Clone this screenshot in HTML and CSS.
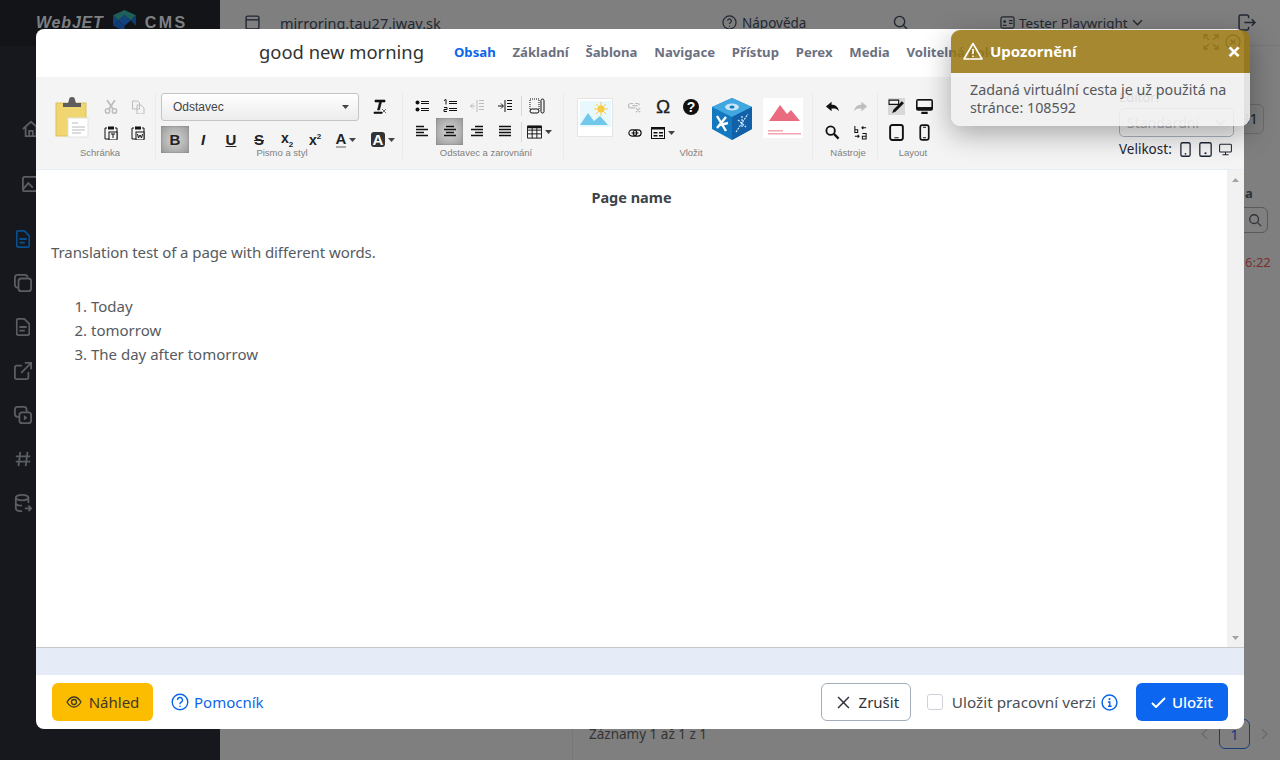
FILE: index.html
```html
<!DOCTYPE html>
<html lang="sk">
<head>
  <meta charset="UTF-8" />
  <title>WebJET CMS</title>
  <meta name="viewport" content="width=device-width, initial-scale=1.0" />
  <link rel="stylesheet" href="styles.css">
</head>
<body>
  <svg class="sprites" width="0" height="0">
    <symbol id="i-file" viewBox="0 0 16 20"><path d="M2.5 1h7L15 6.5V17a2 2 0 0 1-2 2H3a2 2 0 0 1-2-2V2.500A1.500 1.500 0 0 1 2.500 1zM4 10h8M4 14h6" fill="none" stroke="currentColor" stroke-width="2"/></symbol>
    <symbol id="i-caret" viewBox="0 0 7 4"><path d="M0 0h7L3.500 4z" fill="currentColor"/></symbol>
  </svg>

  <aside class="sidebar">
    <div class="logo">
      <span class="logo-web">WebJET</span>
      <svg class="logo-cube" viewBox="0 0 24 20"><path d="M12 0l11 5-5 5-6-5-6 5-5-5z" fill="#1d5f5a"/><path d="M1 5l5 5-5 5zM12 5l6 5-6 5-6-5z" fill="#14427e"/><path d="M23 5v10l-5-5zM1 15l5-5 6 5v5z" fill="#0f3d75"/></svg>
      <span class="logo-cms">CMS</span>
    </div>
    <nav class="side-nav">
      <svg class="side-icon" viewBox="0 0 22 20"><path d="M2 10l9-8 9 8M5 8v10h12V8M9 18v-6h4v6" fill="none" stroke="currentColor" stroke-width="2"/></svg>
      <svg class="side-icon" viewBox="0 0 22 20"><rect x="2" y="2" width="18" height="16" rx="2" fill="none" stroke="currentColor" stroke-width="2"/><path d="M2 16l6-7 5 5" fill="none" stroke="currentColor" stroke-width="2"/></svg>
      <svg class="side-icon active" viewBox="0 0 16 20"><use href="#i-file"/></svg>
      <svg class="side-icon" viewBox="0 0 20 20"><rect x="5" y="5" width="14" height="14" rx="3" fill="none" stroke="currentColor" stroke-width="2"/><path d="M5 15a3 3 0 0 1-4-3V4a3 3 0 0 1 3-3h8a3 3 0 0 1 3 3" fill="none" stroke="currentColor" stroke-width="2"/></svg>
      <svg class="side-icon" viewBox="0 0 16 20"><use href="#i-file"/></svg>
      <svg class="side-icon" viewBox="0 0 20 20"><path d="M9 4H3a2 2 0 0 0-2 2v11a2 2 0 0 0 2 2h11a2 2 0 0 0 2-2v-6M8 12L18 2M12 1h7v7" fill="none" stroke="currentColor" stroke-width="2"/></svg>
      <svg class="side-icon" viewBox="0 0 20 20"><rect x="1" y="1" width="13" height="11" rx="3" fill="none" stroke="currentColor" stroke-width="2"/><rect x="6" y="7" width="13" height="12" rx="3" fill="#16181d" stroke="currentColor" stroke-width="2"/><path d="M11 10l4 3-4 3z" fill="currentColor"/></svg>
      <svg class="side-icon" viewBox="0 0 20 20"><path d="M7 2L5 18M15 2l-2 16M2 7h16M2 13h16" fill="none" stroke="currentColor" stroke-width="2"/></svg>
      <svg class="side-icon" viewBox="0 0 20 20"><ellipse cx="9" cy="4" rx="7" ry="3" fill="none" stroke="currentColor" stroke-width="2"/><path d="M2 4v12c0 2 3 3 7 3M16 4v6M2 10c0 2 3 3 7 3M12 16h7M16 13l3 3-3 3" fill="none" stroke="currentColor" stroke-width="2"/></svg>
    </nav>
  </aside>

  <main class="page">
    <div class="topbar">
      <svg class="top-icon" viewBox="0 0 14 14"><rect x="1" y="1" width="12" height="12" rx="1.500" fill="none" stroke="currentColor" stroke-width="1.300"/><path d="M1 4.500h12" stroke="currentColor" stroke-width="1.300"/></svg>
      <span class="top-domain">mirroring.tau27.iway.sk</span>
      <span class="top-help">
        <svg class="top-icon" viewBox="0 0 16 16"><circle cx="8" cy="8" r="7" fill="none" stroke="currentColor" stroke-width="1.300"/><path d="M6 6.200a2 2 0 1 1 3 1.800c-.8.500-1 .9-1 1.700M8 11.500v1" fill="none" stroke="currentColor" stroke-width="1.300"/></svg>
        Nápověda
      </span>
      <svg class="top-icon top-search" viewBox="0 0 16 16"><circle cx="7" cy="7" r="5.500" fill="none" stroke="currentColor" stroke-width="1.500"/><path d="M11 11l4 4" stroke="currentColor" stroke-width="1.500"/></svg>
      <span class="top-user">
        <svg class="top-icon" viewBox="0 0 16 14"><rect x="1" y="1" width="14" height="12" rx="2" fill="none" stroke="currentColor" stroke-width="1.300"/><circle cx="5" cy="6" r="1.500" fill="currentColor"/><path d="M3 10h4M9.500 5h4M9.500 8h4" stroke="currentColor" stroke-width="1.300"/></svg>
        Tester Playwright
        <svg class="top-chev" viewBox="0 0 10 6"><path d="M1 1l4 4 4-4" fill="none" stroke="currentColor" stroke-width="1.300"/></svg>
      </span>
      <svg class="top-icon top-logout" viewBox="0 0 17 16"><path d="M10 4V2.500A1.500 1.500 0 0 0 8.500 1h-6A1.500 1.500 0 0 0 1 2.500v11A1.500 1.500 0 0 0 2.500 15h6a1.500 1.500 0 0 0 1.500-1.500V12M6 8h10M13 5l3 3-3 3" fill="none" stroke="currentColor" stroke-width="1.400"/></svg>
    </div>
    <div class="page-bottom">
      <span>Záznamy 1 až 1 z 1</span>
      <span class="pager">
        <svg class="pager-chev" viewBox="0 0 6 10"><path d="M5 1L1 5l4 4" fill="none" stroke="currentColor" stroke-width="1.300"/></svg>
        <b class="pager-num">1</b>
        <svg class="pager-chev" viewBox="0 0 6 10"><path d="M1 1l4 4-4 4" fill="none" stroke="currentColor" stroke-width="1.300"/></svg>
      </span>
    </div>
  </main>

  <div class="peek-th">a</div>
  <div class="peek-search"><svg viewBox="0 0 16 16"><circle cx="7" cy="7" r="5" fill="none" stroke="currentColor" stroke-width="1.500"/><path d="M11 11l4 4" stroke="currentColor" stroke-width="1.500"/></svg></div>
  <div class="peek-time">6:22</div>
  <div class="peek-one">81</div>

  <section class="modal">
    <header class="modal-head">
      <h2 class="modal-title">good new morning</h2>
      <ul class="tabs">
        <li class="tab active">Obsah</li>
        <li class="tab">Základní</li>
        <li class="tab">Šablona</li>
        <li class="tab">Navigace</li>
        <li class="tab">Přístup</li>
        <li class="tab">Perex</li>
        <li class="tab">Media</li>
        <li class="tab">Volitelná pole</li>
      </ul>
      <span class="head-tools">
        <svg viewBox="0 0 16 16"><path d="M1 5V1h4M11 1h4v4M15 11v4h-4M5 15H1v-4M1 1l5 5M15 1l-5 5M15 15l-5-5M1 15l5-5" fill="none" stroke="currentColor" stroke-width="1.300"/></svg>
        <svg viewBox="0 0 16 16"><circle cx="8" cy="8" r="7" fill="none" stroke="currentColor" stroke-width="1.300"/><path d="M5.500 5.500l5 5M10.500 5.500l-5 5" stroke="currentColor" stroke-width="1.300"/></svg>
      </span>
    </header>

    <div class="ribbon">
      <div class="group group-clip">
        <div class="group-body">
          <svg class="big-clip" viewBox="0 0 34 41">
            <rect x="1" y="6" width="30" height="33" fill="#efd670" stroke="#ddc25a"/>
            <path d="M8 6h5l1-3a3 3 0 0 1 6 0l1 3h5v4H8z" fill="#5d5d5d"/>
            <rect x="13" y="21" width="20" height="19" fill="#fff" stroke="#e2e2e2"/>
            <path d="M17 26h6M17 30h13M17 33h13M17 36h9" stroke="#b9b9b9"/>
          </svg>
          <div class="icons c2">
            <span class="tb off"><svg viewBox="0 0 14 14"><circle cx="3.500" cy="11" r="2.200" fill="none" stroke="currentColor" stroke-width="1.500"/><circle cx="10.500" cy="11" r="2.200" fill="none" stroke="currentColor" stroke-width="1.500"/><path d="M3 0l6 9M11 0L5 9" stroke="currentColor" stroke-width="1.800"/></svg></span>
            <span class="tb off"><svg viewBox="0 0 14 14"><path d="M1.500 1h5l2 2v6h-7zM6 5h4l3 3v6H6z" fill="#f4f4f4" stroke="currentColor"/></svg></span>
            <span class="tb"><svg viewBox="0 0 14 14"><path d="M3 2H1v11h12V2h-2" fill="none" stroke="currentColor"/><rect x="4" y="0.500" width="6" height="3" fill="currentColor"/><rect x="5" y="6" width="8" height="8" fill="#f4f4f4" stroke="currentColor"/><path d="M7 8h4M9 8v4" stroke="currentColor"/></svg></span>
            <span class="tb"><svg viewBox="0 0 14 14"><path d="M3 2H1v11h12V2h-2" fill="none" stroke="currentColor"/><rect x="4" y="0.500" width="6" height="3" fill="currentColor"/><rect x="5" y="6" width="8" height="8" fill="#f4f4f4" stroke="currentColor"/><path d="M6.500 8l1 4 1.500-3 1.500 3 1-4" fill="none" stroke="currentColor"/></svg></span>
          </div>
        </div>
        <small class="group-label">Schránka</small>
      </div>

      <div class="group group-font">
        <div class="font-top">
          <span class="select-format">Odstavec<svg class="caret" viewBox="0 0 7 4"><use href="#i-caret"/></svg></span>
          <span class="tb"><svg viewBox="0 0 16 16"><path d="M4 1h10v2H10.500L8.500 11H6.500L8.500 3H4zM3 13h8v1.500H3zM11 10l4 4M15 10l-4 4" fill="currentColor" stroke="currentColor" stroke-width=".6"/></svg></span>
        </div>
        <div class="font-row">
          <span class="tb pressed"><b class="glyph">B</b></span>
          <span class="tb"><i class="glyph serif">I</i></span>
          <span class="tb"><b class="glyph under">U</b></span>
          <span class="tb"><b class="glyph strike">S</b></span>
          <span class="tb"><b class="glyph small">x<sub>2</sub></b></span>
          <span class="tb"><b class="glyph small">x<sup>2</sup></b></span>
          <span class="tb wide"><b class="glyph color-a">A</b><svg class="caret" viewBox="0 0 7 4"><use href="#i-caret"/></svg></span>
          <span class="tb wide"><b class="glyph bg-a">A</b><svg class="caret" viewBox="0 0 7 4"><use href="#i-caret"/></svg></span>
        </div>
        <small class="group-label">Pismo a styl</small>
      </div>

      <div class="group group-para">
        <div class="icons c5">
          <span class="tb"><svg viewBox="0 0 14 14"><circle cx="2.500" cy="3.500" r="2" fill="currentColor"/><circle cx="2.500" cy="10.500" r="2" fill="currentColor"/><path d="M6 2.500h8M6 4.500h8M6 9.500h8M6 11.500h8" stroke="currentColor"/></svg></span>
          <span class="tb"><svg viewBox="0 0 14 14"><path d="M1 1.500l2-1v5M1 8.500h3v2H1v2h3M6 2.500h8M6 4.500h8M6 9.500h8M6 11.500h8" fill="none" stroke="currentColor"/></svg></span>
          <span class="tb off"><svg viewBox="0 0 14 14"><path d="M7 1v12M9 1.500h5M9 4.500h5M9 7.500h5M9 10.500h5M0 7h5M3 4.500L0.500 7 3 9.500" fill="none" stroke="currentColor"/></svg></span>
          <span class="tb"><svg viewBox="0 0 14 14"><path d="M7 1v12M9 1.500h5M9 4.500h5M9 7.500h5M9 10.500h5M0 7h5M3 4.500L5.500 7 3 9.500" fill="none" stroke="currentColor"/></svg></span>
          <span class="tb sep"><svg viewBox="0 0 16 16"><path d="M1 1h9v11H1z" fill="none" stroke="currentColor" stroke-dasharray="1 1"/><rect x="1" y="11" width="9" height="4" rx="2" fill="#f4f4f4" stroke="currentColor"/><rect x="12" y="1" width="3" height="14" rx="1.500" fill="#f4f4f4" stroke="currentColor"/></svg></span>
          <span class="tb"><svg viewBox="0 0 14 14"><path d="M1 1.500h8M1 4.500h12M1 7.500h8M1 10.500h12" stroke="currentColor" stroke-width="1.600"/></svg></span>
          <span class="tb pressed"><svg viewBox="0 0 14 14"><path d="M3 1.500h8M1 4.500h12M3 7.500h8M1 10.500h12" stroke="currentColor" stroke-width="1.600"/></svg></span>
          <span class="tb"><svg viewBox="0 0 14 14"><path d="M5 1.500h8M1 4.500h12M5 7.500h8M1 10.500h12" stroke="currentColor" stroke-width="1.600"/></svg></span>
          <span class="tb"><svg viewBox="0 0 14 14"><path d="M1 1.500h12M1 4.500h12M1 7.500h12M1 10.500h12" stroke="currentColor" stroke-width="1.600"/></svg></span>
          <span class="tb sep wide-table"><svg viewBox="0 0 16 14"><path d="M.5 .5h15v13H.5zM.5 5h15M.5 9h15M5.500 .5v13M10.500 .5v13" fill="none" stroke="currentColor"/><path d="M.5 .5h15V3H.5z" fill="currentColor"/></svg><svg class="caret" viewBox="0 0 7 4"><use href="#i-caret"/></svg></span>
        </div>
        <small class="group-label">Odstavec a zarovnání</small>
      </div>

      <div class="group group-insert">
        <div class="insert-body">
          <svg class="big-image" viewBox="0 0 36 39">
            <rect x=".5" y=".5" width="35" height="38" fill="#fff" stroke="#e4e4e4"/>
            <rect x="3" y="3" width="31" height="26" fill="#e9f8fc"/>
            <path d="M3 27l8-12 6 8 6-5 8 9z" fill="#72c8ea"/>
            <circle cx="24" cy="11" r="3.500" fill="#f7cb45"/>
            <path d="M24 4v14M17 11h14M19 6l10 10M29 6L19 16" stroke="#f7cb45"/>
          </svg>
          <div class="icons c3">
            <span class="tb off"><svg viewBox="0 0 16 14"><path d="M6 3H3a2 2 0 0 0 0 5h5M8 3h3a2 2 0 0 1 2 2M5 5.500h6M9 8l5 5M14 8l-5 5" fill="none" stroke="currentColor" stroke-width="1.400"/></svg></span>
            <span class="tb"><b class="glyph omega">Ω</b></span>
            <span class="tb"><b class="glyph help">?</b></span>
            <span class="tb"><svg viewBox="0 0 16 10"><rect x="1" y="1.500" width="9" height="7" rx="3.500" fill="none" stroke="currentColor" stroke-width="1.300"/><rect x="6" y="1.500" width="9" height="7" rx="3.500" fill="none" stroke="currentColor" stroke-width="1.300"/><path d="M4 5h8" stroke="currentColor" stroke-width="1.300"/></svg></span>
            <span class="tb wide"><svg viewBox="0 0 14 12"><rect x=".5" y=".5" width="13" height="11" fill="none" stroke="currentColor"/><path d="M.5 .5h13V2.500H.5z" fill="currentColor"/><path d="M2.500 5h4v1.500h-4zM2.500 8h4v1.500h-4zM8 5h4v1.500H8zM8 8h4v1.500H8z" fill="currentColor"/></svg><svg class="caret" viewBox="0 0 7 4"><use href="#i-caret"/></svg></span>
          </div>
          <svg class="big-cube" viewBox="0 0 40 42">
            <path d="M20 0l20 9v22L20 42 0 31V9z" fill="#1478c0"/>
            <path d="M20 0l20 9-20 10L0 9z" fill="#41a7e0"/>
            <path d="M20 19l20-10v22L20 42z" fill="#1160a8"/>
            <ellipse cx="20" cy="9" rx="7" ry="3.500" fill="#fff" opacity=".7"/>
            <ellipse cx="20" cy="9" rx="2.500" ry="1.500" fill="#1478c0"/>
            <path d="M5 18l9 15M14 19L5 30M8 27l8-2" stroke="#fff" stroke-width="2.400"/>
            <path d="M24 34l12-18M26 22l8 7M30 18v12" stroke="#d7ecfa" stroke-width="1.200" stroke-dasharray="2 1"/>
          </svg>
          <svg class="big-red" viewBox="0 0 40 40">
            <rect width="40" height="40" fill="#fff"/>
            <path d="M6 23L17 7l7 9 4-4 9 11z" fill="#ea6a7f"/>
            <path d="M5 32h15v1.500H5z" fill="#f3a6b2"/>
            <path d="M5 35h33v1.500H5z" fill="#f3a6b2"/>
          </svg>
        </div>
        <small class="group-label">Vložit</small>
      </div>

      <div class="group group-tools">
        <div class="icons c2">
          <span class="tb"><svg viewBox="0 0 16 12"><path d="M7 1L1 6l6 5V8c3 0 6 0 8 3-1-5-4-7-8-7z" fill="currentColor"/></svg></span>
          <span class="tb off"><svg viewBox="0 0 16 12"><path d="M9 1l6 5-6 5V8c-3 0-6 0-8 3 1-5 4-7 8-7z" fill="currentColor"/></svg></span>
          <span class="tb"><svg viewBox="0 0 16 16"><circle cx="6" cy="6" r="4.500" fill="none" stroke="currentColor" stroke-width="2"/><path d="M9.500 9.500l5 5" stroke="currentColor" stroke-width="2.400"/></svg></span>
          <span class="tb"><svg viewBox="0 0 16 16"><path d="M2 1v7h1M2 5h3v3H2M2 12h4M5 10.500L6.500 12 5 13.500M14 3h-4M11 1.500L9.500 3 11 4.500M10 9h4v6h-4v-3h4" fill="none" stroke="currentColor" stroke-width="1.100"/></svg></span>
        </div>
        <small class="group-label">Nástroje</small>
      </div>

      <div class="group group-layout">
        <div class="icons c2">
          <span class="tb toggled"><svg viewBox="0 0 16 16"><path d="M1 2h9v4H1z" fill="#f4f4f4" stroke="currentColor"/><path d="M4 14l1-3 8-8 2 2-8 8z" fill="currentColor"/></svg></span>
          <span class="tb"><svg viewBox="0 0 16 14"><rect x="0" y="0" width="16" height="11" rx="2" fill="currentColor"/><rect x="1.500" y="1.500" width="13" height="6" fill="#f4f4f4"/><path d="M5 14h6v-2H5z" fill="currentColor"/></svg></span>
          <span class="tb"><svg viewBox="0 0 14 16"><rect x="1" y="1" width="12" height="14" rx="2" fill="none" stroke="currentColor" stroke-width="1.800"/><path d="M5 13h4" stroke="currentColor"/></svg></span>
          <span class="tb"><svg viewBox="0 0 10 16"><rect x="1" y="1" width="8" height="14" rx="2" fill="none" stroke="currentColor" stroke-width="1.600"/><path d="M3.500 3h3M3.500 13h3" stroke="currentColor"/></svg></span>
        </div>
        <small class="group-label">Layout</small>
      </div>

      <div class="group-editor">
        <label class="editor-label">Editor:</label>
        <span class="editor-select">Standardní<svg viewBox="0 0 10 6"><path d="M1 1l4 4 4-4" fill="none" stroke="currentColor" stroke-width="1.200"/></svg></span>
        <div class="editor-size">
          Velikost:
          <svg viewBox="0 0 10 14"><rect x=".7" y=".7" width="8.600" height="12.600" rx="1.500" fill="none" stroke="currentColor" stroke-width="1.200"/><circle cx="5" cy="11" r=".8" fill="currentColor"/></svg>
          <svg viewBox="0 0 12 14"><rect x=".7" y=".7" width="10.600" height="12.600" rx="1.500" fill="none" stroke="currentColor" stroke-width="1.200"/><circle cx="6" cy="10.500" r="1" fill="currentColor"/></svg>
          <svg viewBox="0 0 15 14"><rect x=".7" y="1" width="13.600" height="9" rx="1" fill="none" stroke="currentColor" stroke-width="1.200"/><path d="M7.500 10v3M4 13h7" stroke="currentColor" stroke-width="1.200"/></svg>
        </div>
      </div>
    </div>

    <div class="editor-area">
      <article class="editor-content">
        <p class="page-name">Page name</p>
        <p class="intro">Translation test of a page with different words.</p>
        <ol class="words">
          <li>Today</li>
          <li>tomorrow</li>
          <li>The day after tomorrow</li>
        </ol>
      </article>
      <div class="scroll">
        <svg viewBox="0 0 7 4"><path d="M0 4h7L3.500 0z" fill="currentColor"/></svg>
        <svg viewBox="0 0 7 4"><use href="#i-caret"/></svg>
      </div>
    </div>
    <div class="strip"></div>

    <footer class="modal-foot">
      <button class="btn btn-preview">
        <svg viewBox="0 0 16 12"><path d="M1 6c2-3.300 4.300-5 7-5s5 1.700 7 5c-2 3.300-4.300 5-7 5S3 9.300 1 6z" fill="none" stroke="currentColor" stroke-width="1.300"/><circle cx="8" cy="6" r="2.500" fill="none" stroke="currentColor" stroke-width="1.300"/></svg>
        Náhled
      </button>
      <a class="help-link">
        <svg viewBox="0 0 18 18"><circle cx="9" cy="9" r="7.800" fill="none" stroke="currentColor" stroke-width="1.400"/><path d="M6.500 7a2.500 2.500 0 1 1 3.700 2.200c-.9.500-1.200 1-1.200 2M9 12.700v1.300" fill="none" stroke="currentColor" stroke-width="1.400"/></svg>
        Pomocník
      </a>
      <span class="foot-right">
        <button class="btn btn-cancel">
          <svg viewBox="0 0 12 12"><path d="M1 1l10 10M11 1L1 11" stroke="currentColor" stroke-width="1.400"/></svg>
          Zrušit
        </button>
        <label class="work-version"><span class="check"></span>Uložit pracovní verzi</label>
        <svg class="info" viewBox="0 0 16 16"><circle cx="8" cy="8" r="7" fill="none" stroke="currentColor" stroke-width="1.400"/><circle cx="8" cy="4.800" r="1" fill="currentColor"/><path d="M6.500 7.500H8.300V11.500M6.500 11.500h3.500" fill="none" stroke="currentColor" stroke-width="1.300"/></svg>
        <button class="btn btn-save">
          <svg viewBox="0 0 15 11"><path d="M1 6l4 4 9-9" fill="none" stroke="currentColor" stroke-width="2"/></svg>
          Uložit
        </button>
      </span>
    </footer>
  </section>

  <div class="toast">
    <div class="toast-head">
      <svg viewBox="0 0 20 18"><path d="M10 1.500L19 17H1z" fill="none" stroke="currentColor" stroke-width="1.600" stroke-linejoin="round"/><path d="M10 7v5M10 13.500v1.500" stroke="currentColor" stroke-width="1.600"/></svg>
      <strong>Upozornění</strong>
      <span class="toast-close">×</span>
    </div>
    <div class="toast-body">Zadaná virtuální cesta je už použitá na stránce: 108592</div>
  </div>
</body>
</html>
```

FILE: styles.css
```css
* {
  box-sizing: border-box;
}
html, body {
  height: 100%;
}
body {
  margin: 0;
  display: flex;
  height: 760px;
  overflow: hidden;
  background: #7f7f7f;
  color: #2f3237;
  font-family: "Noto Sans", sans-serif;
  font-size: 15px;
}
.sprites {
  position: absolute;
}

/* page behind the dialog */
.sidebar {
  width: 220px;
  background: #16181d;
  color: #5a5d62;
}
.logo {
  display: flex;
  align-items: center;
  height: 46px;
  padding-left: 36px;
  color: #7e8084;
  font-family: "Liberation Sans", sans-serif;
  font-weight: 700;
  font-size: 16px;
  background: #121418;
}
.logo-web {
  font-style: italic;
  letter-spacing: 0.8px;
}
.logo-cube {
  width: 25px;
  height: 21px;
  margin: -6px 8px 0 8px;
}
.logo-cms {
  letter-spacing: 2.500px;
}
.side-nav {
  display: flex;
  flex-direction: column;
  align-items: flex-start;
  gap: 26px;
  padding: 74px 0 0 14px;
}
.side-icon {
  width: 18px;
  height: 18px;
}
.side-nav .side-icon:nth-child(-n+2) {
  margin-left: 6px;
  width: 22px;
  margin-bottom: 11px;
}
.side-icon.active {
  color: #064f91;
}
.page {
  flex: 1;
  display: flex;
  flex-direction: column;
  justify-content: space-between;
  color: #222833;
}
.topbar {
  display: flex;
  align-items: center;
  height: 46px;
  padding-left: 25px;
  border-bottom: 1px solid #777;
  font-size: 14.500px;
}
.top-icon {
  width: 15px;
  height: 15px;
}
.top-domain {
  margin-left: 20px;
  width: 442px;
}
.top-help {
  display: flex;
  align-items: center;
  gap: 5px;
  width: 171px;
  font-size: 13.500px;
}
.top-search {
  margin-right: 92px;
}
.top-user {
  display: flex;
  align-items: center;
  gap: 4px;
  width: 238px;
  font-size: 13.400px;
}
.top-chev {
  width: 11px;
  height: 7px;
}
.top-logout {
  width: 18px;
  height: 17px;
}
.page-bottom {
  display: flex;
  align-items: center;
  justify-content: space-between;
  height: 48px;
  margin-left: 352px;
  padding: 0 12px 4px 16px;
  font-size: 13.500px;
  border-left: 1px solid #777;
  color: #333;
}
.pager {
  display: flex;
  align-items: center;
  gap: 11px;
  color: #6c6c6c;
}
.pager-chev {
  width: 7px;
  height: 12px;
}
.pager-num {
  display: flex;
  align-items: center;
  justify-content: center;
  width: 31px;
  height: 30px;
  border: 1px solid #1a3d7a;
  border-radius: 6px;
  color: #123a80;
  font-weight: 400;
  font-size: 15px;
}
.peek-th {
  position: absolute;
  left: 1245px;
  top: 184px;
  font-weight: 700;
  font-size: 13px;
}
.peek-search {
  position: absolute;
  left: 1238px;
  top: 207px;
  width: 30px;
  height: 26px;
  padding: 5px 0 0 9px;
  border: 1px solid #5a5a5a;
  border-radius: 6px;
}
.peek-search svg {
  display: block;
  width: 14px;
  height: 14px;
}
.peek-time {
  position: absolute;
  left: 1245px;
  top: 253px;
  color: #7a2f2f;
  font-size: 13px;
}
.peek-one {
  position: absolute;
  left: 1230px;
  top: 104px;
  width: 34px;
  height: 30px;
  padding: 3px 5px 0 0;
  text-align: right;
  border: 1px solid #6b6b6b;
  border-radius: 6px;
  color: #222;
  font-size: 15px;
}

/* dialog */
.modal {
  position: absolute;
  left: 36px;
  top: 29px;
  width: 1208px;
  height: 700px;
  display: flex;
  flex-direction: column;
  background: #fff;
  border-radius: 8px;
  overflow: hidden;
}
.modal-head {
  display: flex;
  align-items: center;
  height: 48px;
  flex-shrink: 0;
  padding: 0 0 3px 223px;
}
.modal-title {
  margin: 0;
  font-size: 18.400px;
  font-weight: 400;
  color: #333;
  white-space: nowrap;
}
.tabs {
  display: flex;
  gap: 16.800px;
  margin: 0 0 0 30px;
  padding: 0;
  list-style: none;
  font-size: 13.150px;
  font-weight: 700;
  color: #6b7080;
  white-space: nowrap;
}
.tab.active {
  color: #0d66e8;
}
.head-tools {
  display: flex;
  gap: 6px;
  align-self: flex-start;
  margin: 5px 3px 0 auto;
  color: #555;
}
.head-tools svg {
  width: 16px;
  height: 16px;
}

/* ribbon */
.ribbon {
  display: flex;
  height: 93px;
  flex-shrink: 0;
  padding: 16px 0 0 15px;
  background: #f4f4f4;
  border-bottom: 1px solid #e6ecf4;
  color: #111;
}
.group {
  position: relative;
  height: 66px;
  border-right: 1px solid #ebebeb;
}
.group-label {
  position: absolute;
  left: 6px;
  right: 0;
  top: 54px;
  text-align: center;
  font-family: "Liberation Sans", sans-serif;
  font-size: 9.500px;
  color: #808080;
}
.group-clip .group-label {
  left: 0;
  right: 6px;
}
.group-layout .group-label {
  left: 0;
}
.group-body,
.insert-body {
  display: flex;
}
.group-clip {
  width: 105px;
}
.big-clip {
  width: 34px;
  height: 41px;
  margin: 4px 0 0 4px;
}
.group-clip .icons {
  margin-left: 8px;
  grid-template-columns: repeat(2, 27.500px);
}
.icons {
  display: grid;
  grid-auto-rows: 26px;
}
.c2 {
  grid-template-columns: repeat(2, 28px);
}
.c3 {
  grid-template-columns: repeat(3, 28px);
}
.c5 {
  grid-template-columns: repeat(4, 27.700px) 33px;
}
.tb {
  display: flex;
  align-items: center;
  justify-content: center;
  height: 27px;
  color: #111;
}
.tb svg {
  width: 14px;
  height: 14px;
}
.tb.off {
  color: #bdbdbd;
}
.tb.pressed {
  background: radial-gradient(circle, #c9c9c9 20%, #989898 100%);
  box-shadow: inset 0 0 2px #777;
}
.tb.toggled svg {
  width: 18px;
  height: 18px;
  background: #d8d8d8;
}
.tb.sep {
  border-left: 1px solid #d8d8d8;
  margin-left: 2px;
  height: 20px;
  margin-top: 3px;
}
.tb.sep svg {
  width: 16px;
  height: 16px;
}
.tb.wide-table {
  justify-content: flex-start;
  padding-left: 5px;
}
.tb .caret,
.tb.sep .caret,
.select-format .caret {
  width: 7px;
  height: 4px;
  margin-left: 3px;
  color: #444;
  flex-shrink: 0;
}
.group-font {
  width: 247px;
  padding-left: 5px;
}
.font-top {
  display: flex;
  gap: 6px;
  align-items: center;
}
.select-format {
  display: flex;
  align-items: center;
  justify-content: space-between;
  width: 198px;
  height: 28px;
  padding: 0 9px 0 11px;
  border: 1px solid #c4c4c4;
  border-radius: 3px;
  background: linear-gradient(#fff, #ececec);
  font-family: "Liberation Sans", sans-serif;
  font-size: 12px;
  color: #444;
}
.font-top .tb {
  width: 28px;
}
.font-top .tb svg {
  width: 16px;
  height: 16px;
}
.font-row {
  display: flex;
  margin-top: 5px;
}
.font-row .tb {
  width: 28px;
}
.font-row .tb.wide {
  width: 34px;
}
.font-row .tb.wide:last-child {
  margin-left: 3px;
}
.glyph {
  font-family: "Liberation Sans", sans-serif;
  font-size: 15px;
  line-height: 1;
  color: #222;
  font-weight: 700;
}
.glyph.under {
  text-decoration: underline;
}
.glyph.strike {
  text-decoration: line-through;
}
.glyph.small {
  font-size: 14px;
}
.glyph.small sub,
.glyph.small sup {
  font-size: 8px;
}
.glyph.color-a {
  border-bottom: 2px solid #aaa;
}
.glyph.bg-a {
  padding: 0 2px;
  border-radius: 3px;
  background: #333;
  color: #fff;
}
.glyph.omega {
  font-size: 19px;
  font-weight: 400;
  -webkit-text-stroke: 0.3px #222;
}
.glyph.help {
  display: block;
  width: 16px;
  height: 16px;
  border-radius: 50%;
  background: #111;
  color: #fff;
  font-size: 14px;
  line-height: 16px;
  text-align: center;
}
.group-para {
  width: 161px;
  padding-left: 5px;
}
.group-para .tb {
  height: 26px;
}
.group-para .tb.sep {
  height: 20px;
}
.group-para .tb.pressed {
  height: 27px;
  margin-top: -1px;
}
.group-insert {
  width: 249px;
  padding-left: 13px;
}
.big-image {
  width: 36px;
  height: 39px;
  margin-top: 5px;
}
.insert-body .icons {
  margin-left: 8px;
  align-self: flex-start;
}
.big-cube {
  width: 40px;
  height: 42px;
  margin: 5px 0 0 7px;
}
.big-red {
  width: 40px;
  height: 40px;
  margin: 5px 0 0 11px;
}
.group-tools {
  width: 65px;
  padding-left: 5px;
}
.group-tools .tb svg {
  width: 15px;
  height: 15px;
}
.group-layout {
  width: 70px;
  padding-left: 4px;
  border-right: none;
}
.group-layout .tb svg {
  width: 17px;
  height: 17px;
}
.group-editor {
  margin-left: 171px;
  width: 115px;
  color: #1c2333;
}
.editor-label {
  display: block;
  margin-top: -5px;
  height: 20px;
  font-size: 13px;
  color: #555;
}
.editor-select {
  display: flex;
  align-items: center;
  justify-content: space-between;
  height: 29px;
  padding: 0 7px;
  border: 1px solid #aab2bf;
  border-radius: 5px;
  font-size: 14px;
  color: #a8adb5;
}
.editor-select svg {
  width: 11px;
  height: 7px;
}
.editor-size {
  display: flex;
  align-items: center;
  gap: 7px;
  margin-top: 3px;
  font-size: 13.500px;
}
.editor-size svg {
  width: 13px;
  height: 15px;
}

/* editor */
.editor-area {
  height: 478px;
  flex-shrink: 0;
  display: flex;
  border-bottom: 1px solid #c8c8c8;
}
.editor-content {
  flex: 1;
  padding: 0 15px;
  font-size: 15px;
  line-height: 24px;
  color: #555b61;
}
.page-name {
  margin: 15px 0 0;
  text-align: center;
  font-weight: 700;
  font-size: 14.500px;
  color: #3c4349;
}
.intro {
  margin: 31px 0 0;
  letter-spacing: -0.08px;
}
.words {
  margin: 30px 0 0;
  padding-left: 40px;
}
.scroll {
  display: flex;
  flex-direction: column;
  justify-content: space-between;
  align-items: center;
  width: 17px;
  padding: 8px 0 7px;
  background: #f1f1f1;
  color: #a3a3a3;
}
.scroll svg {
  width: 7px;
  height: 4px;
}
.strip {
  height: 27px;
  flex-shrink: 0;
  background: #e6ecf7;
}
.modal-foot {
  display: flex;
  align-items: center;
  height: 54px;
  flex-shrink: 0;
  padding: 0 16px;
}
.btn {
  display: inline-flex;
  align-items: center;
  justify-content: center;
  height: 38px;
  border: 1px solid transparent;
  border-radius: 6px;
  font-family: inherit;
  font-size: 15px;
  padding: 0;
}
.btn-preview {
  gap: 7px;
  width: 101px;
  background: #fcbc00;
  color: #3e3a24;
}
.btn-preview svg {
  width: 16px;
  height: 12px;
}
.help-link {
  display: flex;
  align-items: center;
  gap: 5px;
  margin-left: 18px;
  color: #0d66e8;
}
.help-link svg {
  width: 18px;
  height: 18px;
}
.foot-right {
  display: flex;
  align-items: center;
  margin-left: auto;
}
.btn-cancel {
  gap: 9px;
  width: 90px;
  padding-left: 4px;
  background: #fff;
  border-color: #a4adbc;
  color: #30343a;
}
.btn-cancel svg {
  width: 13px;
  height: 13px;
}
.work-version {
  display: flex;
  align-items: center;
  gap: 9px;
  margin-left: 16px;
  color: #4a4f55;
  font-size: 15.300px;
}
.check {
  width: 16px;
  height: 16px;
  border: 1px solid #ced2d8;
  border-radius: 3px;
  background: #fff;
}
.info {
  width: 17px;
  height: 17px;
  margin: 0 18px 0 5px;
  color: #0d66e8;
}
.btn-save {
  gap: 6px;
  width: 92px;
  background: #0d66f0;
  color: #fff;
  font-weight: 500;
}
.btn-save svg {
  width: 15px;
  height: 11px;
}

/* notification */
.toast {
  position: absolute;
  left: 951px;
  top: 30px;
  width: 299px;
  height: 96px;
  border-radius: 9px;
  overflow: hidden;
  box-shadow: 0 8px 28px rgba(0, 0, 0, 0.32);
}
.toast-head {
  display: flex;
  align-items: center;
  height: 43px;
  padding: 0 9px 2px 12px;
  background: rgba(153, 119, 19, 0.88);
  color: #fff;
  font-size: 15px;
}
.toast-head svg {
  width: 20px;
  height: 18px;
  margin-right: 7px;
}
.toast-close {
  margin-left: auto;
  font-size: 24px;
  font-weight: 700;
  line-height: 1;
}
.toast-body {
  height: 53px;
  padding: 8px 15px 0 19px;
  background: rgba(240, 240, 240, 0.88);
  font-size: 14.300px;
  line-height: 18px;
  color: #55585c;
}
```
